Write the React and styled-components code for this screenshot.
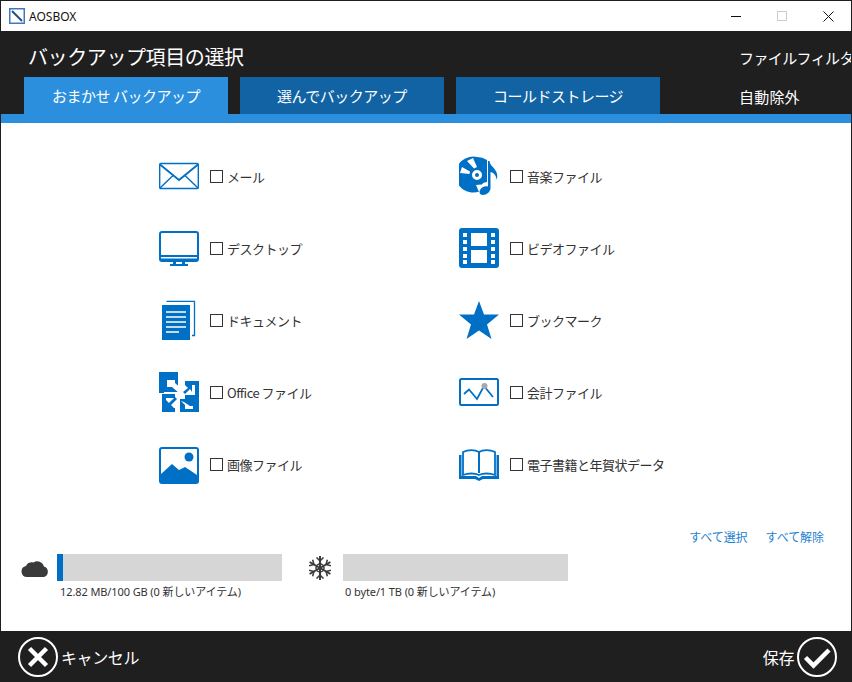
import React from 'react';
import styled, { createGlobalStyle } from 'styled-components';

const GlobalStyle = createGlobalStyle`
  html, body { margin: 0; padding: 0; background: #fff; }
  * { box-sizing: border-box; }
  body { font-family: "Noto Sans CJK JP", "Noto Sans", sans-serif; }
`;

const Win = styled.div`
  width: 852px;
  height: 682px;
  border-left: 1px solid #1f1f1f;
  border-right: 1px solid #1f1f1f;
  border-top: 1px solid #1f1f1f;
  display: flex;
  flex-direction: column;
  background: #fff;
  overflow: hidden;
`;

const TitleBar = styled.div`
  height: 30px;
  display: flex;
  align-items: center;
  padding-left: 8px;
  flex: none;
`;

const AppName = styled.span`
  font-family: "Noto Sans", sans-serif;
  font-size: 12px;
  margin-left: 4px;
  color: #111;
  flex: 1;
`;

const WinButton = styled.div`
  width: 46px;
  height: 30px;
  display: flex;
  align-items: center;
  justify-content: center;
`;

const Header = styled.div`
  height: 83px;
  flex: none;
  background: #1f1f1f;
  display: flex;
  justify-content: space-between;
`;

const HeaderLeft = styled.div`
  display: flex;
  flex-direction: column;
  padding-left: 23px;
`;

const Title = styled.div`
  height: 46px;
  padding: 12px 0 0 4px;
  color: #fff;
  font-size: 20px;
  line-height: 28px;
  letter-spacing: -0.4px;
`;

const Tabs = styled.div`
  display: flex;
  gap: 12px;
`;

const Tab = styled.div`
  width: 204px;
  height: 37px;
  display: flex;
  align-items: center;
  justify-content: center;
  color: #fff;
  font-size: 15px;
  letter-spacing: -0.5px;
  background: ${(p) => (p.$active ? '#2b8fdd' : '#1263a3')};
`;

const HeaderRight = styled.div`
  display: flex;
  flex-direction: column;
  padding: 16px 9px 0 0;
  gap: 17px;
  width: 112px;
  color: #fff;
  font-size: 15px;
  line-height: 22px;
  letter-spacing: -0.6px;
`;

const HeaderLink = styled.div`
  white-space: nowrap;
  letter-spacing: ${(p) => (p.$wide ? '0.2px' : '-0.6px')};
`;

const Strip = styled.div`
  height: 9px;
  flex: none;
  background: #2b8fdd;
`;

const Body = styled.div`
  flex: 1;
  display: flex;
  flex-direction: column;
  padding: 17px 0 0 0;
`;

const Grid = styled.div`
  display: grid;
  grid-template-columns: 300px 300px;
  grid-auto-rows: 72px;
  padding-left: 158px;
`;

const Item = styled.label`
  display: flex;
  align-items: center;
  height: 72px;
`;

const IconBox = styled.div`
  width: 40px;
  height: 40px;
  margin-right: 11px;
  flex: none;
  color: #0070c6;
`;

const Check = styled.span`
  width: 13px;
  height: 13px;
  border: 1px solid #333;
  background: #fff;
  flex: none;
  margin-right: 4px;
`;

const Label = styled.span`
  font-size: 13px;
  color: #333;
  letter-spacing: -0.5px;
  white-space: nowrap;
`;

const Links = styled.div`
  display: flex;
  justify-content: flex-end;
  gap: 18px;
  padding-right: 27px;
  margin-top: 26px;
  height: 20px;
  align-items: center;
`;

const Lnk = styled.span`
  color: #1e7fd0;
  font-size: 12px;
  letter-spacing: -0.05px;
`;

const Usage = styled.div`
  display: flex;
  margin-top: 8px;
  padding-left: 20px;
`;

const Meter = styled.div`
  display: flex;
  width: ${(p) => p.$w}px;
`;

const MeterIcon = styled.div`
  width: ${(p) => p.$w}px;
  height: 27px;
  flex: none;
  display: flex;
  align-items: center;
  color: #3a3a3a;
`;

const MeterBody = styled.div`
  width: 225px;
`;

const Bar = styled.div`
  height: 27px;
  background: #d6d6d6;
`;

const BarFill = styled.div`
  height: 100%;
  background: #0070c6;
`;

const MeterText = styled.div`
  font-family: "Noto Sans", "Noto Sans CJK JP", sans-serif;
  font-size: 11px;
  line-height: 16px;
  margin-top: 3px;
  padding-left: ${(p) => p.$pad}px;
  color: #333;
  white-space: nowrap;
  letter-spacing: -0.1px;
`;

const Footer = styled.div`
  height: 51px;
  flex: none;
  background: #1f1f1f;
  display: flex;
  align-items: center;
  justify-content: space-between;
  padding: 0 14px 0 17px;
  color: #fff;
  font-size: 16px;
`;

const FootBtn = styled.div`
  display: flex;
  align-items: center;
  gap: 3px;
  letter-spacing: -0.4px;
`;

const MailIcon = () => (
  <svg viewBox="0 0 40 40" width="40" height="40" fill="none" stroke="currentColor">
    <rect x="0.7" y="7.5" width="38.6" height="25" rx="1" strokeWidth="1.4" />
    <path d="M1 8.5 L20 24 L39 8.5" strokeWidth="1.8" />
    <path d="M1 32 L14 19.5 M39 32 L26 19.5" strokeWidth="1.4" />
  </svg>
);

const MonitorIcon = () => (
  <svg viewBox="0 0 40 40" width="40" height="40">
    <path fill="currentColor" fillRule="evenodd" d="M3 3h34a3 3 0 0 1 3 3v25a3 3 0 0 1-3 3H26v2h3v2H11v-2h3v-2H3a3 3 0 0 1-3-3V6a3 3 0 0 1 3-3Zm-1 3v21h36V6a1 1 0 0 0-1-1H3a1 1 0 0 0-1 1Zm0 23v1.500h36V29Zm15 5v2h6v-2Z" />
  </svg>
);

const DocIcon = () => (
  <svg viewBox="0 0 40 40" width="40" height="40">
    <path fill="none" stroke="currentColor" strokeWidth="1.3" d="M7.500 1.300H35.500V35.500H33" />
    <rect x="3" y="5" width="28" height="35" fill="currentColor" />
    <path stroke="#fff" strokeWidth="1.6" d="M7 12H27M7 17H27M7 22H27M7 27H27M7 32H20" />
  </svg>
);

const OfficeIcon = () => (
  <svg viewBox="0 0 40 40" width="40" height="40">
    <path fill="currentColor" fillRule="evenodd" d="M0 0H19V5H5V21H0Z" />
    <rect x="5" y="5" width="14" height="15" fill="currentColor" />
    <path fill="#fff" d="M8 8H16V11L24 18L20 21L13 15H8Z" />
    <path fill="currentColor" d="M24 10H40V26H32V22H24Z" opacity="0" />
    <path fill="currentColor" fillRule="evenodd" d="M26 9H40V27H26V23H36V13H26Z" />
    <path fill="currentColor" d="M36 13H26L29 16L24 20L26 22L31 17L33 20V13Z" />
    <path fill="currentColor" fillRule="evenodd" d="M3 22H16V26H7V36H16V40H3Z" />
    <path fill="currentColor" d="M7 36H15L12 33L18 27L16 25L10 31L7 28Z" />
    <rect x="21" y="27" width="19" height="13" fill="currentColor" />
    <path fill="#fff" d="M25 30L31 34H34V37H26V33L22 29Z" />
  </svg>
);

const ImageIcon = () => (
  <svg viewBox="0 0 40 40" width="40" height="40">
    <path fill="currentColor" fillRule="evenodd" d="M3 3H37a3 3 0 0 1 3 3V37a3 3 0 0 1-3 3H3a3 3 0 0 1-3-3V6a3 3 0 0 1 3-3Zm-1 27 11-10 7 6 6-3 12 8V6a1 1 0 0 0-1-1H3a1 1 0 0 0-1 1Z" />
    <circle cx="30" cy="13" r="4.500" fill="currentColor" />
  </svg>
);

const MusicIcon = () => (
  <svg viewBox="0 0 40 40" width="40" height="40">
    <path fill="currentColor" fillRule="evenodd" d="M18 1a18 18 0 0 1 10 3V26a8 8 0 0 0-7.500 9.500A18 18 0 1 1 18 1Zm0 13a5 5 0 1 0 0 10 5 5 0 0 0 0-10Z" />
    <path fill="#fff" d="M14 2 18 11 15 12.500 8 5ZM22 28.500 25 33 20 36 17 29Z" />
    <path fill="#fff" d="M3 11 11 15.500 10.500 18 1 17Z" />
    <path fill="currentColor" fillRule="evenodd" d="M29 5h1.500c.5 4 3 5 5 8 3 4 3.500 7 2 11 0-3-1.500-7-6-8V32c0 4-4 7-7.500 7s-4-3-3-5c1.500-3 5-4.500 8-3.500Z" />
    <circle cx="18" cy="19" r="2" fill="currentColor" />
  </svg>
);

const FilmIcon = () => (
  <svg viewBox="0 0 40 40" width="40" height="40">
    <path fill="currentColor" fillRule="evenodd" d="M3 0H37a3 3 0 0 1 3 3V37a3 3 0 0 1-3 3H3a3 3 0 0 1-3-3V3a3 3 0 0 1 3-3ZM12 5V18H28V5ZM12 22V35H28V22ZM4 5V9H8V5ZM4 12V16H8V12ZM4 19V23H8V19ZM4 26V30H8V26ZM4 32V36H8V32ZM32 5V9H36V5ZM32 12V16H36V12ZM32 19V23H36V19ZM32 26V30H36V26ZM32 32V36H36V32Z" />
  </svg>
);

const StarIcon = () => (
  <svg viewBox="0 0 40 40" width="40" height="40">
    <path fill="currentColor" d="M20 1 25 14.500H40L28 24.500 32.500 39 20 30.500 7.500 39 12 24.500 0 14.500H15Z" />
  </svg>
);

const ChartIcon = () => (
  <svg viewBox="0 0 40 40" width="40" height="40">
    <rect x="1" y="7" width="38" height="26" rx="1.500" fill="none" stroke="currentColor" strokeWidth="2" />
    <path d="M5 22 10 17.500 18 27 25 14 34 25" fill="none" stroke="currentColor" strokeWidth="1.800" />
    <circle cx="25.500" cy="14" r="3" fill="#a8a8a8" />
  </svg>
);

const BookIcon = () => (
  <svg viewBox="0 0 40 40" width="40" height="40">
    <path fill="none" stroke="currentColor" strokeWidth="1.800" d="M4 8C9 5.500 16 5.500 20 8C24 5.500 31 5.500 36 8V31C31 29 24 29 20 31C16 29 9 29 4 31Z" />
    <path stroke="currentColor" strokeWidth="2" d="M20 8V29" />
    <path fill="currentColor" d="M0 11H2.500V32H17L20 34 23 32H37.500V11H40V35H24L20 37 16 35H0Z" />
  </svg>
);

const CloudIcon = () => (
  <svg viewBox="0 0 28 18" width="28" height="18">
    <path fill="currentColor" d="M6 18a5.500 5.500 0 0 1-1-10.900A6 6 0 0 1 12.500 3.500 7 7 0 0 1 23 7.500 5.500 5.500 0 0 1 23 18Z" />
  </svg>
);

const SnowIcon = () => (
  <svg viewBox="0 0 26 26" width="26" height="26" fill="none" stroke="currentColor" strokeWidth="2">
    {[0, 60, 120].map((a) => (
      <g key={a} transform={`rotate(${a} 13 13)`}>
        <path d="M13 1V25" />
        <path d="M9.500 2.500 13 6 16.500 2.500M9.500 23.500 13 20 16.500 23.500" strokeWidth="1.500" />
      </g>
    ))}
    <circle cx="13" cy="13" r="4" strokeWidth="1.500" />
  </svg>
);

const Cancel = () => (
  <svg viewBox="0 0 40 40" width="40" height="40" fill="none" stroke="#fff">
    <circle cx="20" cy="20" r="19" strokeWidth="2" />
    <path d="M11.500 11.500 28.500 28.500M28.500 11.500 11.500 28.500" strokeWidth="4.500" />
  </svg>
);

const Save = () => (
  <svg viewBox="0 0 40 40" width="40" height="40" fill="none" stroke="#fff">
    <circle cx="20" cy="20" r="19" strokeWidth="2" />
    <path d="M8.500 20.500 16.500 28.500 32 13" strokeWidth="4.500" />
  </svg>
);

const items = [
  ['メール', MailIcon],
  ['音楽ファイル', MusicIcon],
  ['デスクトップ', MonitorIcon],
  ['ビデオファイル', FilmIcon],
  ['ドキュメント', DocIcon],
  ['ブックマーク', StarIcon],
  ['Office ファイル', OfficeIcon],
  ['会計ファイル', ChartIcon],
  ['画像ファイル', ImageIcon],
  ['電子書籍と年賀状データ', BookIcon],
];

export default function App() {
  return (
    <Win>
      <GlobalStyle />
      <TitleBar>
        <svg width="16" height="16" viewBox="0 0 16 16">
          <rect x="0.750" y="0.750" width="14.500" height="14.500" fill="#fff" stroke="#3f78bd" strokeWidth="1.500" />
          <path d="M3 3 13 13" stroke="#1f4e85" strokeWidth="2" />
        </svg>
        <AppName>AOSBOX</AppName>
        <WinButton>
          <svg width="11" height="11"><path d="M0 5.500H10" stroke="#111" /></svg>
        </WinButton>
        <WinButton>
          <svg width="11" height="11"><rect x="0.500" y="0.500" width="9" height="9" fill="none" stroke="#ccc" /></svg>
        </WinButton>
        <WinButton>
          <svg width="11" height="11"><path d="M0.500 0.500 10.500 10.500M10.500 0.500 0.500 10.500" stroke="#111" /></svg>
        </WinButton>
      </TitleBar>
      <Header>
        <HeaderLeft>
          <Title>バックアップ項目の選択</Title>
          <Tabs>
            <Tab $active>おまかせ バックアップ</Tab>
            <Tab>選んでバックアップ</Tab>
            <Tab>コールドストレージ</Tab>
          </Tabs>
        </HeaderLeft>
        <HeaderRight>
          <HeaderLink>ファイルフィルター</HeaderLink>
          <HeaderLink $wide>自動除外</HeaderLink>
        </HeaderRight>
      </Header>
      <Strip />
      <Body>
        <Grid>
          {items.map(([text, Icon]) => (
            <Item key={text}>
              <IconBox><Icon /></IconBox>
              <Check />
              <Label>{text}</Label>
            </Item>
          ))}
        </Grid>
        <Links>
          <Lnk>すべて選択</Lnk>
          <Lnk>すべて解除</Lnk>
        </Links>
        <Usage>
          <Meter $w={286}>
            <MeterIcon $w={36}><CloudIcon /></MeterIcon>
            <MeterBody>
              <Bar><BarFill style={{ width: 6 }} /></Bar>
              <MeterText $pad={3}>12.82 MB/100 GB (0 新しいアイテム)</MeterText>
            </MeterBody>
          </Meter>
          <Meter $w={261}>
            <MeterIcon $w={36}><SnowIcon /></MeterIcon>
            <MeterBody>
              <Bar />
              <MeterText $pad={2}>0 byte/1 TB (0 新しいアイテム)</MeterText>
            </MeterBody>
          </Meter>
        </Usage>
      </Body>
      <Footer>
        <FootBtn><Cancel />キャンセル</FootBtn>
        <FootBtn>保存<Save /></FootBtn>
      </Footer>
    </Win>
  );
}
